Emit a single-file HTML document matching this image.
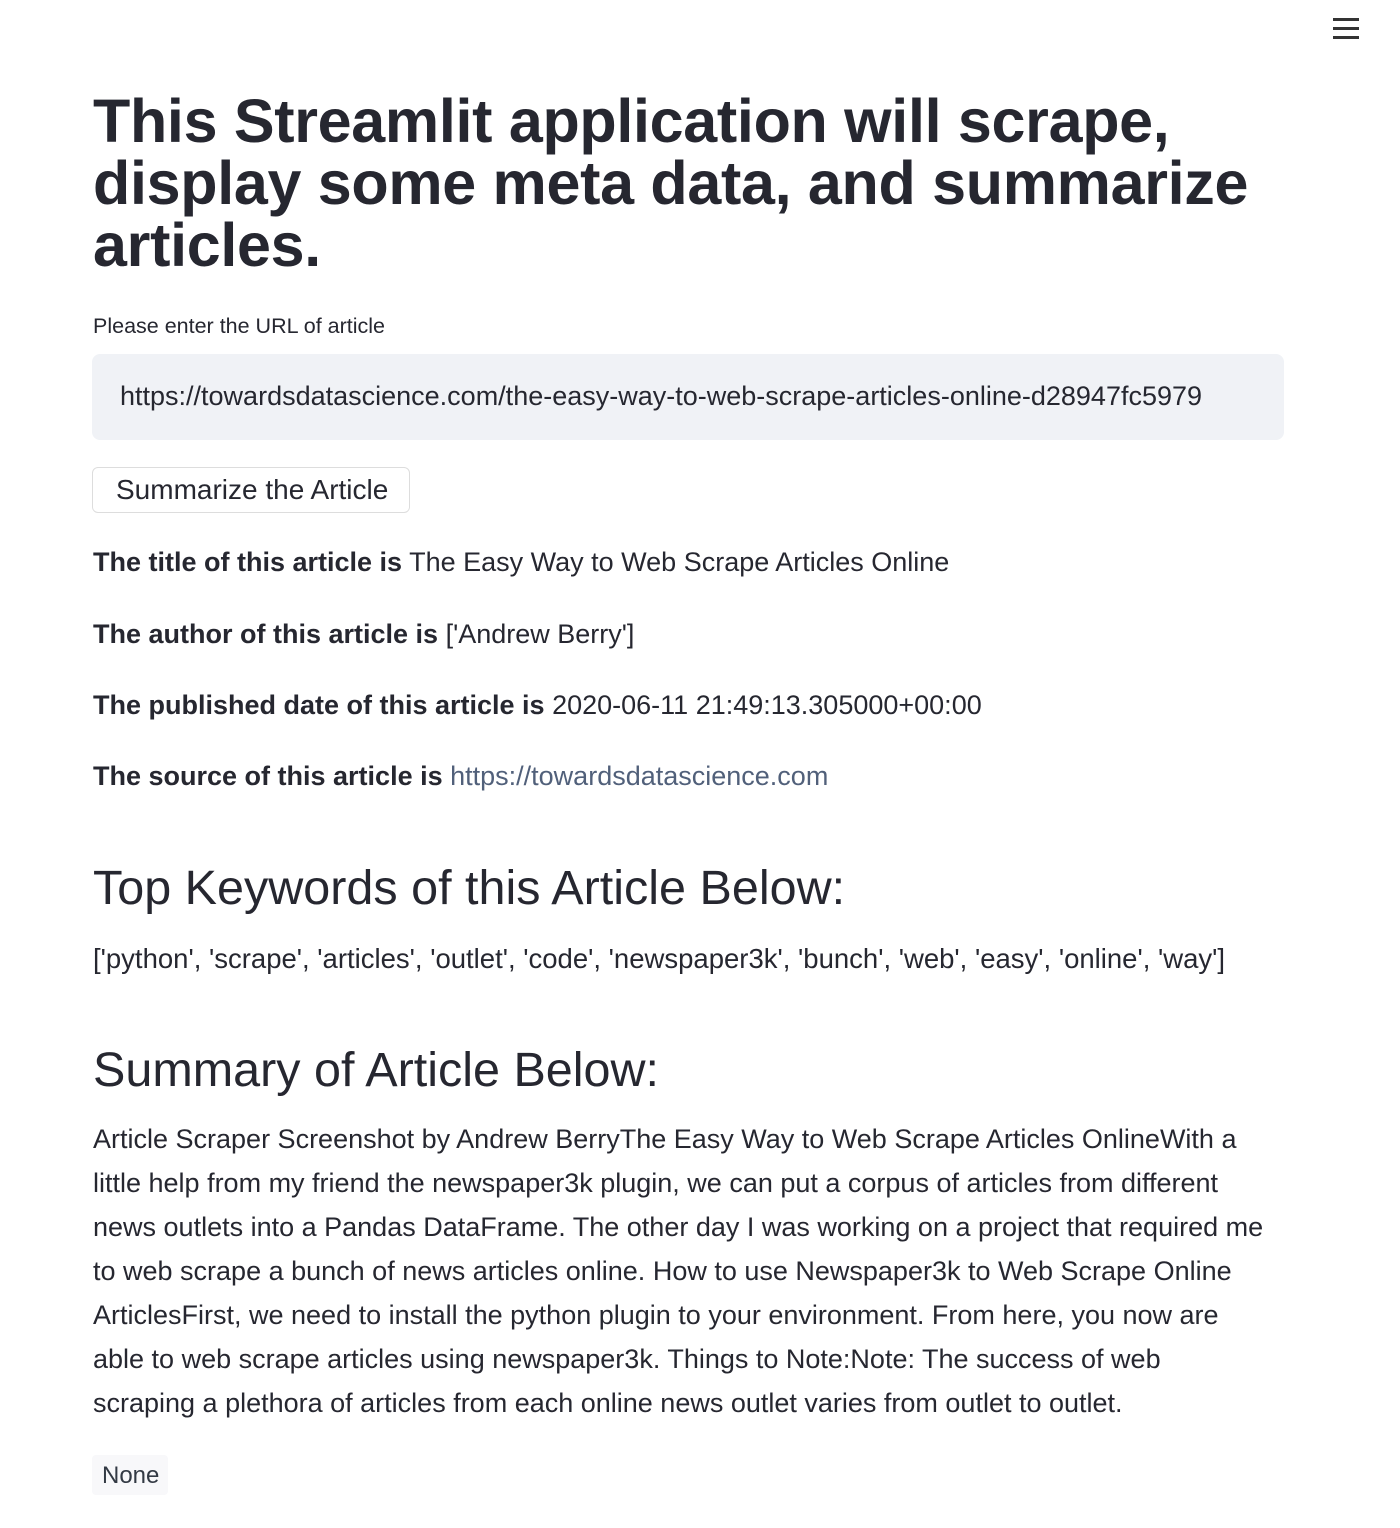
<!DOCTYPE html>
<html><head><meta charset="utf-8"><style>
body{margin:0;width:1400px;height:1528px;background:#fff;font-family:"Liberation Sans",sans-serif;color:#262730;position:relative;overflow:hidden}
.a{position:absolute;left:93px;white-space:nowrap}
h1{margin:0;font-size:61px;line-height:62px;font-weight:bold;letter-spacing:-0.3px}
.p{font-size:27px}
b{font-weight:bold}
.h{font-size:48.5px}
.sum{font-size:27px;line-height:44px}
</style></head><body>
<div style="position:absolute;left:1333px;top:18px;width:26px">
<div style="height:2.5px;background:#333;margin-bottom:6.5px"></div><div style="height:2.5px;background:#333;margin-bottom:6.5px"></div><div style="height:2.5px;background:#333"></div></div>
<h1 class="a" style="top:90px">This Streamlit application will scrape,<br>display some meta data, and summarize<br>articles.</h1>
<div class="a" style="top:314px;font-size:21.5px">Please enter the URL of article</div>
<div style="position:absolute;left:92px;top:354px;width:1192px;height:86px;background:#f0f2f6;border-radius:8px;overflow:hidden"><div style="position:absolute;left:28px;top:27px;font-size:27px;white-space:nowrap">https://towardsdatascience.com/the-easy-way-to-web-scrape-articles-online-d28947fc5979</div></div>
<div style="position:absolute;left:92px;top:467px;width:318px;height:46px;border:1px solid #ddd;border-radius:6px;box-sizing:border-box"></div>
<div class="a" style="left:116px;top:474px;font-size:28px">Summarize the Article</div>
<div class="a p" style="top:547px"><b>The title of this article is</b> The Easy Way to Web Scrape Articles Online</div>
<div class="a p" style="top:619px"><b>The author of this article is</b> ['Andrew Berry']</div>
<div class="a p" style="top:690px"><b>The published date of this article is</b> 2020-06-11 21:49:13.305000+00:00</div>
<div class="a p" style="top:761px"><b>The source of this article is</b> <span style="color:#51607a">https://towardsdatascience.com</span></div>
<div class="a h" style="top:860px">Top Keywords of this Article Below:</div>
<div class="a p" style="top:943px;font-size:27.5px">['python', 'scrape', 'articles', 'outlet', 'code', 'newspaper3k', 'bunch', 'web', 'easy', 'online', 'way']</div>
<div class="a h" style="top:1042px">Summary of Article Below:</div>
<div class="a sum" style="top:1117px">Article Scraper Screenshot by Andrew BerryThe Easy Way to Web Scrape Articles OnlineWith a<br>little help from my friend the newspaper3k plugin, we can put a corpus of articles from different<br>news outlets into a Pandas DataFrame. The other day I was working on a project that required me<br>to web scrape a bunch of news articles online. How to use Newspaper3k to Web Scrape Online<br>ArticlesFirst, we need to install the python plugin to your environment. From here, you now are<br>able to web scrape articles using newspaper3k. Things to Note:Note: The success of web<br>scraping a plethora of articles from each online news outlet varies from outlet to outlet.</div>
<div style="position:absolute;left:92px;top:1455px;width:76px;height:40px;background:#f8f8fa;border-radius:4px"></div>
<div class="a" style="left:102px;top:1462px;font-size:24px;color:#333a44">None</div>
</body></html>
